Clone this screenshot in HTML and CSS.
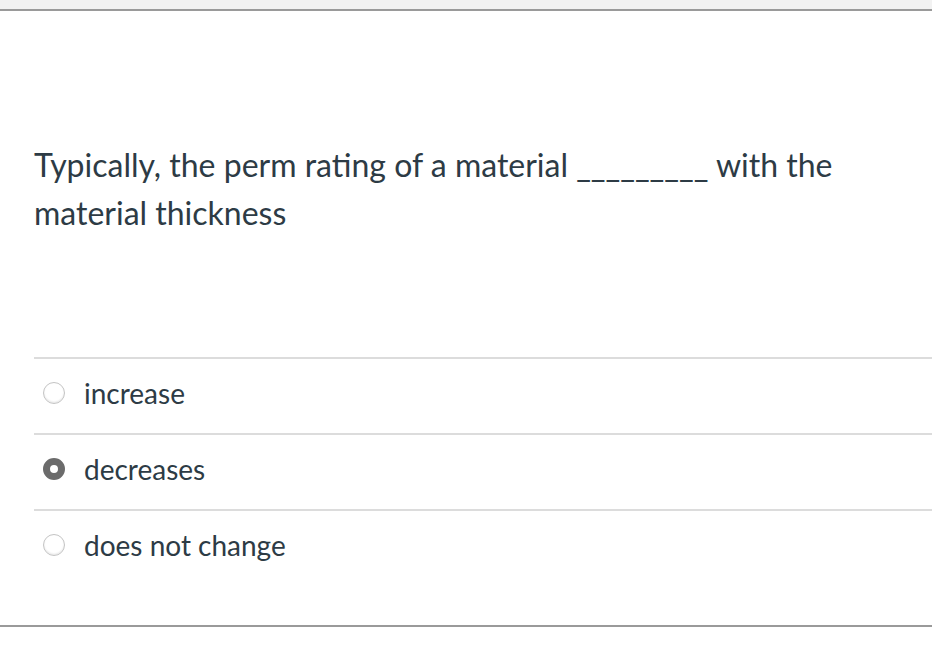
FILE: index.html
```html
<!DOCTYPE html>
<html>
<head>
<meta charset="utf-8">
<link rel="stylesheet" href="styles.css">
</head>
<body>
<div class="topbar"></div>
<div class="question">
  <p class="question-text">Typically, the perm rating of a material _________ with the material thickness</p>
</div>
<div class="answers">
  <label class="answer">
    <span class="radio"></span>
    <span class="answer-text">increase</span>
  </label>
  <label class="answer">
    <span class="radio checked"></span>
    <span class="answer-text">decreases</span>
  </label>
  <label class="answer">
    <span class="radio"></span>
    <span class="answer-text">does not change</span>
  </label>
</div>
<div class="footer"></div>
</body>
</html>
```

FILE: styles.css
```css
html, body {
  margin: 0;
  padding: 0;
  background: #ffffff;
  font-family: Lato, "Open Sans", sans-serif;
  color: #2d3b45;
}
.topbar {
  height: 9px;
  background: #f2f2f2;
  border-bottom: 2px solid #9a9a9a;
}
.question {
  padding: 0 80px 0 34px;
  height: 346px;
  display: flex;
  flex-direction: column;
}
.question-text {
  margin: 130px 0 0 0;
  font-size: 32px;
  line-height: 48px;
}
.answers {
  margin-left: 34px;
}
.answer {
  display: flex;
  align-items: center;
  height: 68px;
  padding-bottom: 6px;
  border-top: 2px solid #dcdcdc;
  padding-left: 9px;
}
.radio {
  width: 22px;
  height: 22px;
  border-radius: 50%;
  box-sizing: border-box;
  border: 1px solid #c4c4c4;
  background: radial-gradient(circle at 50% 40%, #ffffff 60%, #f1f1f1 100%);
  box-shadow: inset 0 -1px 2px rgba(0,0,0,0.08);
  flex: none;
}
.radio.checked {
  border: 7px solid #6b6b6b;
  background: #ffffff;
  box-shadow: none;
}
.answer-text {
  margin-left: 19px;
  font-size: 28px;
}
.footer {
  margin-top: 40px;
  border-top: 2px solid #9a9a9a;
}
```
